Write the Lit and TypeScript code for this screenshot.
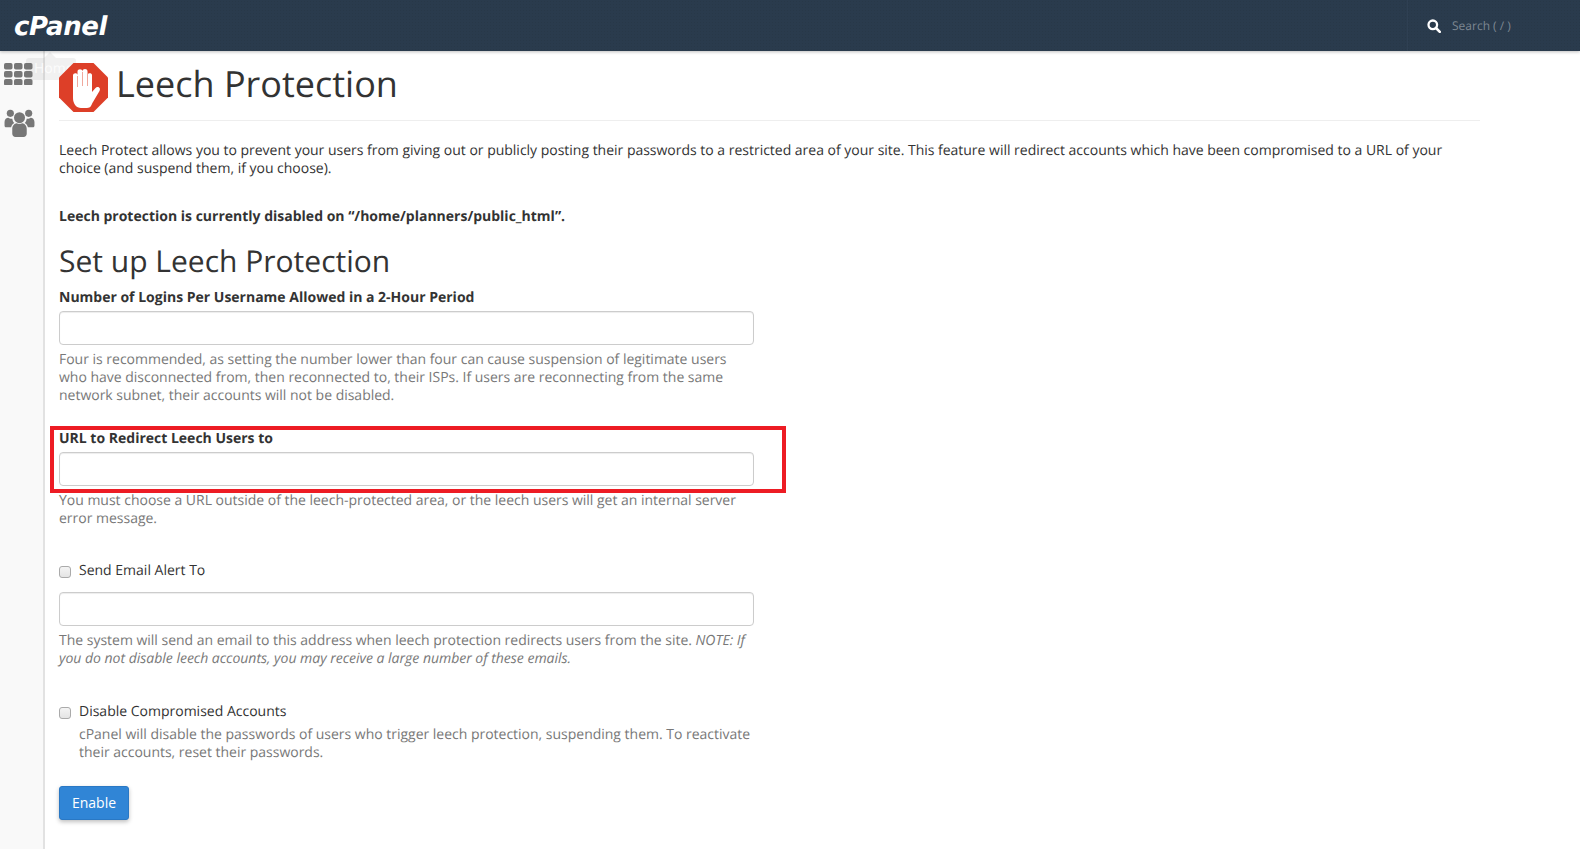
import { LitElement, html, css, svg } from "lit";
import { customElement } from "lit/decorators.js";

const hand = svg`<svg class="stop" width="49" height="49" viewBox="0 0 49 49" aria-hidden="true">
  <polygon points="14.500,0 34.500,0 49,14.500 49,34.500 34.500,49 14.500,49 0,34.500 0,14.500" fill="#dd3f28"/>
  <path d="M14 12.500c0-2.800 4.500-2.800 4.500-.3V8.500c0-2.900 5-2.900 5 0v-.3c0-2.900 5-2.900 5 0v4c0-2.600 4.500-2.600 4.500 0V29l3.300-3.800c2.200-2.500 6-.3 4.200 2.700l-6.500 11c-1.800 3-2 6-6 6h-6c-4.500 0-8-4-8-10z" fill="#fff"/>
  <path d="M18.500 13v11M23.500 9v14M28.500 9v14" stroke="#f0a89c" stroke-width="1" fill="none"/>
</svg>`;

const grid = svg`<svg width="29" height="22" viewBox="0 0 29 22" aria-hidden="true" fill="#777">
  ${[0, 8, 16].flatMap((y) => [0, 10, 20].map((x) => svg`<rect x=${x} y=${y} width="8.500" height="6.500" rx="1.800"/>`))}
</svg>`;

const users = svg`<svg width="31" height="28" viewBox="0 0 32 29" aria-hidden="true" fill="#777">
  <circle cx="6.500" cy="4.500" r="3.700"/><circle cx="25.500" cy="4.500" r="3.700"/><circle cx="16" cy="9" r="5.700"/>
  <path d="M.5 13.500c0-3 2-4.500 4-4.500 1.200.9 2.300 1.100 4 1 .3 2 1 3.300 2.200 4.400-1.900 1-3 2.600-3.400 4.600H2.500c-1.300 0-2-.8-2-2z"/>
  <path d="M31.500 13.500c0-3-2-4.500-4-4.500-1.200.9-2.300 1.100-4 1-.3 2-1 3.300-2.200 4.400 1.900 1 3 2.600 3.400 4.600h4.800c1.300 0 2-.8 2-2z"/>
  <path d="M8.500 21c0-3.800 2.300-6 4.600-6.300 1.800 1 3.900 1 5.800 0 2.300.3 4.600 2.500 4.600 6.300v4.700c0 1.900-1.400 3.300-3.300 3.300h-8.400c-1.900 0-3.300-1.400-3.300-3.300z"/>
</svg>`;

const search = svg`<svg width="14" height="14" viewBox="0 0 14 14" aria-hidden="true">
  <circle cx="5.800" cy="5.800" r="4.300" fill="none" stroke="#fff" stroke-width="2.300"/>
  <path d="M9 9l3.800 3.800" stroke="#fff" stroke-width="2.600" stroke-linecap="round"/>
</svg>`;

@customElement("app-root")
export class AppRoot extends LitElement {
  static styles = css`
    :host {
      display: block;
      height: 849px;
      overflow: hidden;
      background: #fff;
      color: #333;
      font-family: "Open Sans", "DejaVu Sans", sans-serif;
      font-size: 14px;
      line-height: 18px;
      text-rendering: geometricPrecision;
    }
    * { box-sizing: border-box; }
    .top {
      height: 51px;
      background-color: #2a3b4d;
      background-image: radial-gradient(rgba(0,0,0,.06) 1px, transparent 1px);
      background-size: 3px 3px;
      display: flex;
      justify-content: space-between;
      box-shadow: 0 1px 3px rgba(0,0,0,.25);
      position: relative;
      z-index: 2;
    }
    .logo {
      margin: 9px 0 0 14px;
      color: #fff;
      font-family: "DejaVu Sans", sans-serif;
      font-style: italic;
      font-weight: 700;
      font-size: 26px;
      line-height: 36px;
      letter-spacing: -0.400px;
    }
    .search {
      width: 173px;
      border-left: 1px solid #2f4053;
      display: flex;
      align-items: center;
      gap: 11px;
      padding-left: 19px;
      color: #7d8792;
      font-size: 12px;
    }
    .search svg { flex: none; }
    .body { display: flex; height: 798px; }
    .side {
      width: 45px;
      flex: none;
      background: #f9f9f9;
      border-right: 2px solid #e2e2e2;
      display: flex;
      flex-direction: column;
      align-items: flex-start;
      padding: 12px 0 0 4px;
      gap: 24px;
      margin-right: 14px;
      position: relative;
    }
    .side svg { display: block; }
    .tip {
      position: absolute;
      left: 26px;
      top: 7px;
      width: 50px;
      height: 22px;
      background: rgba(120,120,120,.1);
      border-radius: 3px;
      color: rgba(255,255,255,.8);
      font-size: 14px;
      line-height: 22px;
      padding-left: 8px;
      overflow: hidden;
    }
    .tip-arrow {
      position: absolute;
      left: 44px;
      top: 1px;
      width: 0;
      height: 0;
      border: 6px solid transparent;
      border-top: 0;
      border-bottom-color: rgba(120,120,120,.1);
    }
    .main { width: 1421px; flex: none; position: relative; z-index: 1; }
    .head {
      display: flex;
      align-items: flex-start;
      gap: 8px;
      height: 70px;
      border-bottom: 1px solid #eee;
      padding-top: 12px;
    }
    .stop { flex: none; }
    h1 {
      margin: 1px 0 0;
      font-size: 36px;
      line-height: 40px;
      font-weight: 400;
      color: #333;
    }
    p { margin: 0; }
    .intro { margin-top: 21px; letter-spacing: -0.012px; }
    .state { margin-top: 30px; font-weight: 700; }
    h2 {
      margin: 18px 0 0;
      font-size: 30px;
      line-height: 33px;
      font-weight: 400;
    }
    .form { width: 695px; }
    label.t { display: block; font-weight: 700; margin-top: 12px; height: 22px; }
    input.text {
      display: block;
      width: 695px;
      height: 34px;
      border: 1px solid #ccc;
      border-radius: 4px;
      background: #fff;
      box-shadow: inset 0 1px 1px rgba(0,0,0,.075);
      margin: 0;
    }
    .help { color: #787878; margin-top: 6px; letter-spacing: -0.012px; }
    .g2 { margin-top: 25px; position: relative; }
    .g2 label.t { margin-top: 0; height: 22px; }
    .g2::before {
      content: "";
      box-sizing: border-box;
      position: absolute;
      left: -9px;
      top: -4px;
      width: 736px;
      height: 67px;
      border: 4px solid #ed1c24;
      pointer-events: none;
    }
    .check {
      display: flex;
      align-items: center;
      gap: 8px;
      height: 20px;
    }
    .check input {
      appearance: none;
      width: 12px;
      height: 12px;
      margin: 2px 0 0;
      flex: none;
      background: linear-gradient(#f4f4f4, #e4e4e4);
      border: 1px solid #aaa;
      border-radius: 3px;
    }
    .g3 { margin-top: 33px; }
    .g3 input.text { margin-top: 11px; }
    .g4 { margin-top: 34px; }
    .g4 .help { margin: 4px 0 0 20px; }
    .btn {
      display: block;
      margin-top: 24px;
      width: 70px;
      height: 34px;
      background: #3085d6;
      border: 1px solid #2a78c4;
      border-radius: 3px;
      color: #fff;
      font: 14px "Open Sans", sans-serif;
      box-shadow: 0 2px 4px rgba(0,0,0,.25);
      padding: 0 0 1px;
    }
  `;

  render() {
    return html`
      <header class="top">
        <div class="logo">cPanel</div>
        <div class="search">${search}<span>Search ( / )</span></div>
      </header>
      <div class="body">
        <nav class="side">
          ${grid}
          ${users}
          <span class="tip-arrow"></span>
          <span class="tip">Home</span>
        </nav>
        <main class="main">
          <div class="head">${hand}<h1>Leech Protection</h1></div>
          <p class="intro">Leech Protect allows you to prevent your users from giving out or publicly posting their passwords to a restricted area of your site. This feature will redirect accounts which have been compromised to a URL of your choice (and suspend them, if you choose).</p>
          <p class="state">Leech protection is currently disabled on “/home/planners/public_html”.</p>
          <h2>Set up Leech Protection</h2>
          <div class="form">
            <label class="t">Number of Logins Per Username Allowed in a 2-Hour Period</label>
            <input class="text" type="text" />
            <p class="help">Four is recommended, as setting the number lower than four can cause suspension of legitimate users who have disconnected from, then reconnected to, their ISPs. If users are reconnecting from the same network subnet, their accounts will not be disabled.</p>
            <div class="g2">
              <label class="t">URL to Redirect Leech Users to</label>
              <input class="text" type="text" />
              <p class="help">You must choose a URL outside of the leech-protected area, or the leech users will get an internal server error message.</p>
            </div>
            <div class="g3">
              <label class="check"><input type="checkbox" />Send Email Alert To</label>
              <input class="text" type="text" />
              <p class="help">The system will send an email to this address when leech protection redirects users from the site. <em>NOTE: If you do not disable leech accounts, you may receive a large number of these emails.</em></p>
            </div>
            <div class="g4">
              <label class="check"><input type="checkbox" />Disable Compromised Accounts</label>
              <p class="help">cPanel will disable the passwords of users who trigger leech protection, suspending them. To reactivate their accounts, reset their passwords.</p>
            </div>
            <button class="btn">Enable</button>
          </div>
        </main>
      </div>
    `;
  }
}
